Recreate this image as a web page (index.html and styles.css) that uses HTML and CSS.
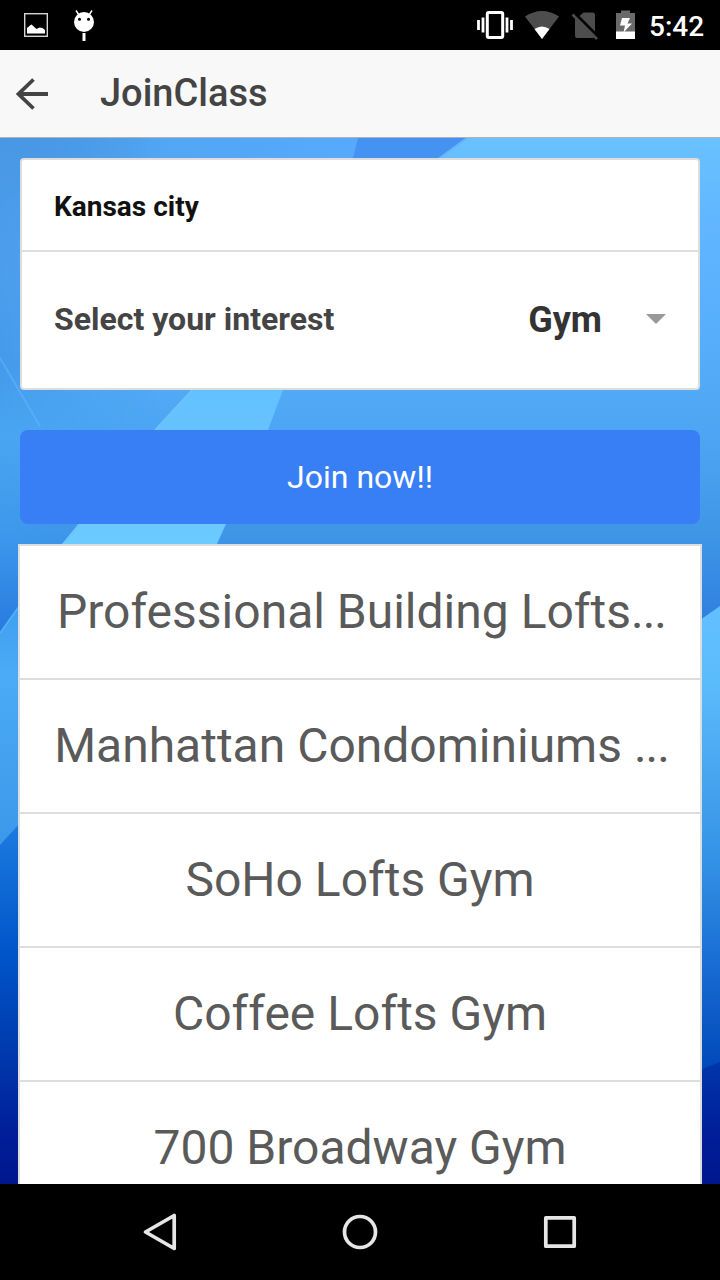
FILE: index.html
```html
<!DOCTYPE html>
<html lang="en">
<head>
<meta charset="utf-8">
<title>JoinClass</title>
<link rel="stylesheet" href="styles.css">
</head>
<body>
<div class="screen">
  <div class="status">
    <svg class="status-left" width="100" height="50" viewBox="0 0 100 50">
      <rect x="24.700" y="13.700" width="22.600" height="22.600" fill="none" stroke="#d4d4d0" stroke-width="1.400"/>
      <path d="M27 33.500V28l3-2.500 1.500-1 5 4.500 3-1.500 3 .5 2.500 2v3.500z" fill="#fff"/>
      <circle cx="84" cy="22" r="10" fill="#fff"/>
      <path d="M79 15l-3-4.500M89 15l3-4.500" stroke="#fff" stroke-width="1.500"/>
      <path d="M84 33v8" stroke="#fff" stroke-width="3"/>
      <circle cx="79.500" cy="19.300" r="1.500"/><circle cx="88.500" cy="19.300" r="1.500"/>
    </svg>
    <svg class="status-right" width="165" height="50" viewBox="475 0 165 50">
      <rect x="487.300" y="12.500" width="15.400" height="25" rx="1.500" fill="none" stroke="#fff" stroke-width="3"/>
      <path d="M478.500 20v10M511.500 20v10M483 17.500v15M507 17.500v15" stroke="#fff" stroke-width="2.800"/>
      <path d="M525 16.500Q542 5.500 559 16.500L542 39z" fill="#4d4d4d"/>
      <path d="M534.500 29q7.500-5 15 0L542 39z" fill="#fff"/>
      <path d="M579.500 16l4-3.500h9q2.500 0 2.500 2.500v20.500q0 2.500-2.500 2.500H577q-2 0-2-2.500V19z" fill="#4d4d4d"/>
      <path d="M574 12.500l25 25" stroke="#000" stroke-width="3"/>
      <path d="M572.500 14.500L597 39" stroke="#4d4d4d" stroke-width="2.500"/>
      <path d="M616 13h5v-2.500h9V13h5v19h-19z" fill="#6a6a6a"/>
      <path d="M616 31.500h19V39h-19z" fill="#fff"/>
      <path d="M622 18h8l-2.500 5.500h4.500l-8.500 9 1.500-7h-5z" fill="#fff"/>
    </svg>
    <span class="clock">5:42</span>
  </div>
  <header class="bar">
    <svg class="back" width="32" height="32" viewBox="0 0 32 32"><path d="M32 16H2M17.500 1.500L2.500 16l15 14.500" fill="none" stroke="#444" stroke-width="3.800"/></svg>
    <h1 class="title">JoinClass</h1>
  </header>
  <main class="content">
    <svg class="wallpaper" width="720" height="1046" viewBox="0 138 720 1046">
      <defs>
        <linearGradient id="base" gradientUnits="userSpaceOnUse" x1="0" y1="138" x2="0" y2="1184">
          <stop offset="0" stop-color="#4f9ff0"/><stop offset=".24" stop-color="#52aaf7"/><stop offset=".32" stop-color="#48a0ef"/><stop offset=".39" stop-color="#3d93e5"/><stop offset=".46" stop-color="#2f80df"/><stop offset=".66" stop-color="#1b7ae0"/><stop offset=".78" stop-color="#0055c8"/><stop offset=".86" stop-color="#003eb2"/><stop offset=".95" stop-color="#001f98"/><stop offset="1" stop-color="#00168d"/>
        </linearGradient>
        <linearGradient id="top"><stop offset="0" stop-color="#4798e3"/><stop offset=".45" stop-color="#52a6f3"/><stop offset="1" stop-color="#57a9fd"/></linearGradient>
        <linearGradient id="edge" x1="0" y1="0" x2="0" y2="1"><stop offset="0" stop-color="#4898e3"/><stop offset=".25" stop-color="#4c9eec"/><stop offset=".46" stop-color="#459aeb"/><stop offset=".6" stop-color="#49a5f1"/><stop offset=".8" stop-color="#3d97eb"/><stop offset="1" stop-color="#2879df"/></linearGradient>
        <linearGradient id="fade"><stop offset="0" stop-color="#fff"/><stop offset="1" stop-color="#fff" stop-opacity="0"/></linearGradient>
        <mask id="leftMask"><rect x="0" y="138" width="160" height="500" fill="url(#fade)"/></mask>
        <linearGradient id="sky" x1="0" y1="0" x2="0" y2="1"><stop offset="0" stop-color="#69c1ff"/><stop offset=".4" stop-color="#60b5ff"/><stop offset="1" stop-color="#52aaf7"/></linearGradient>
        <linearGradient id="ray" x1="0" y1="0" x2="0" y2="1"><stop offset="0" stop-color="#64c0ff"/><stop offset="1" stop-color="#6bcaff"/></linearGradient>
        <linearGradient id="leftWing" x1="0" y1="0" x2="0" y2="1"><stop offset="0" stop-color="#3f9ff0"/><stop offset=".3" stop-color="#4babf6"/><stop offset=".7" stop-color="#42a0ef"/><stop offset="1" stop-color="#3b98ea"/></linearGradient>
        <linearGradient id="rightWing" x1="0" y1="0" x2="0" y2="1"><stop offset="0" stop-color="#62c0ff"/><stop offset=".16" stop-color="#5bbcfc"/><stop offset=".35" stop-color="#49a7f1"/><stop offset=".55" stop-color="#3392e5"/><stop offset=".75" stop-color="#1b70d5"/><stop offset="1" stop-color="#0048ba"/></linearGradient>
      </defs>
      <rect x="0" y="138" width="720" height="1046" fill="url(#base)"/>
      <rect x="0" y="138" width="360" height="60" fill="url(#top)"/>
      <rect x="0" y="138" width="160" height="500" fill="url(#edge)" mask="url(#leftMask)"/>
      <path d="M358 138h108l-54 40h-64z" fill="#4493f3"/>
      <path d="M467 138h253v251H600L410 180z" fill="url(#sky)"/>
      <path d="M467 138l-30 22" stroke="#65b6fb" stroke-width="2"/>
      <path d="M192 390h91l-15 40-51 114H62l93-114z" fill="url(#ray)"/>
      <path d="M192 390l-37 40M81 524l-18 20" stroke="#72c3fc" stroke-width="1.500"/>
      <path d="M0 358l40 68" stroke="#65b8fa" stroke-width="2" opacity=".5"/>
      <path d="M0 633l20-28v218L0 845z" fill="url(#leftWing)"/>
      <path d="M0 633l20-28" stroke="#55b3f7" stroke-width="1.500"/>
      <path d="M700 620l20-14v456l-20 8z" fill="url(#rightWing)"/>
    </svg>
    <section class="card">
      <div class="city">Kansas city</div>
      <div class="interest">
        <span class="label">Select your interest</span>
        <span class="value">Gym</span>
        <svg class="caret" width="20" height="10" viewBox="0 0 20 10"><path d="M0 0h20L10 10z" fill="#999"/></svg>
      </div>
    </section>
    <button class="join">Join now!!</button>
    <ul class="places">
      <li class="place">Professional Building Lofts<span class="dots">...</span></li>
      <li class="place">Manhattan Condominiums <span class="dots">...</span></li>
      <li class="place">SoHo Lofts Gym</li>
      <li class="place">Coffee Lofts Gym</li>
      <li class="place">700 Broadway Gym</li>
    </ul>
  </main>
  <nav class="nav">
    <svg width="480" height="96" viewBox="120 1184 480 96" fill="none" stroke="#e6e6e6" stroke-width="3.700" stroke-linejoin="round">
      <path d="M174.200 1215.500v33L145.500 1232z"/>
      <circle cx="360" cy="1232" r="15.500"/>
      <rect x="545.800" y="1217.800" width="28.400" height="28.400"/>
    </svg>
  </nav>
</div>
</body>
</html>
```
FILE: styles.css
```css
* { box-sizing: border-box; }
body { margin: 0; font-family: Roboto, "Noto Sans", sans-serif; }
.screen { width: 720px; height: 1280px; display: flex; flex-direction: column; overflow: hidden; background: #000; }
.status { height: 50px; flex: none; display: flex; align-items: center; background: #000; }
.status svg { display: block; }
.status-right { margin-left: 375px; }
.clock { margin-left: 9px; padding-top: 3px; color: #fff; font-size: 28px; line-height: 32px; font-weight: 500; }
.bar { height: 88px; flex: none; display: flex; align-items: center; padding-left: 16px; background: #f8f8f8; border-bottom: 1px solid #b2b2b2; }
.title { margin: 0 0 2px 52px; color: #444; font-size: 38px; line-height: 44px; font-weight: 500; }
.content { position: relative; flex: 1; min-height: 0; overflow: hidden; padding: 20px 18px 0; }
.wallpaper { position: absolute; left: 0; top: 0; z-index: 0; }
.card, .join, .places { position: relative; z-index: 1; }
.card { height: 232px; margin: 0 2px; background: #fff; border: 2px solid #ddd; border-radius: 4px; }
.city { height: 92px; padding: 1px 32px 0; border-bottom: 2px solid #ddd; color: #111; font-size: 28px; line-height: 92px; font-weight: 700; }
.interest { height: 136px; display: flex; align-items: center; padding: 0 32px; }
.label { flex: 1; padding-bottom: 2px; color: #444; font-size: 32px; font-weight: 700; }
.value { color: #333; font-size: 36px; font-weight: 700; }
.caret { margin: 0 0 2px 44px; }
.join { display: block; width: 680px; height: 94px; margin: 40px 2px 20px; padding: 0; border: 0; border-radius: 8px; background: #387ef5; color: #fff; font: 400 32px/94px Roboto, sans-serif; }
.places { margin: 0; padding: 0; list-style: none; background: #fff; border: 2px solid #ddd; }
.place { height: 134px; border-bottom: 2px solid #ddd; color: #5a5a5a; font-size: 48px; line-height: 132px; text-align: center; white-space: nowrap; }
.dots { margin-right: -3px; letter-spacing: -1px; }
.nav { height: 96px; flex: none; display: flex; justify-content: center; background: #000; }
```
